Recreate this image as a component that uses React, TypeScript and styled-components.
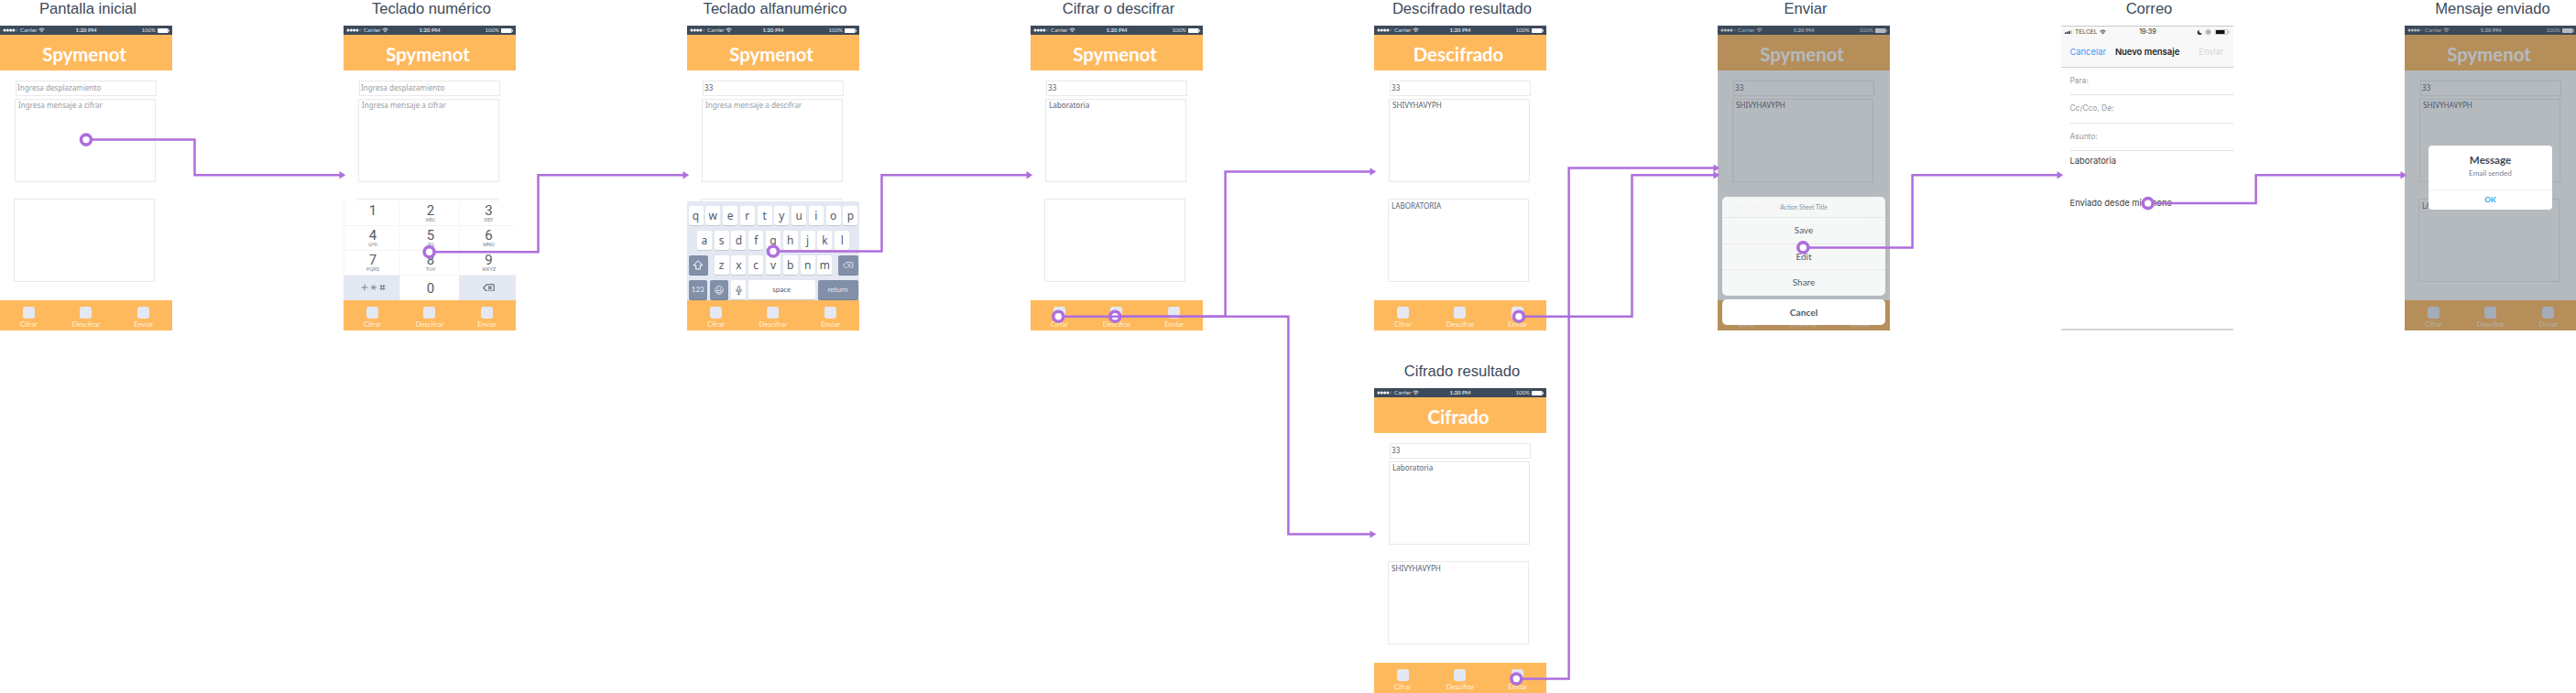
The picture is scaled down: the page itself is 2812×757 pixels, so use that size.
import React from "react";
import styled, { createGlobalStyle, css } from "styled-components";

const color = {
  ink: "#3d4a5b",
  orange: "#ffb95d",
  line: "#e9e9eb",
  purple: "#ae6edd",
  keyboard: "#e4e8f2",
  darkKey: "#8190a8",
  text: "#59616d",
  placeholder: "#959ca6",
};

const GlobalStyle = createGlobalStyle`
  * { box-sizing: border-box; }
  body { margin: 0; background: #fff; overflow: hidden; }
`;

const Board = styled.main`
  position: relative;
  display: grid;
  grid-template-columns: repeat(8, 188px);
  grid-template-rows: 361px 361px;
  column-gap: 187px;
  row-gap: 35px;
  width: 2812px;
  height: 757px;
  overflow: hidden;
`;

const Frame = styled.section<{ $col: number; $row?: number }>`
  grid-column: ${(p) => p.$col};
  grid-row: ${(p) => p.$row ?? 1};
  display: flex;
  flex-direction: column;
`;

const FrameLabel = styled.h2`
  margin: 0;
  padding-left: 4px;
  height: 28px;
  font: 400 16.6px/19px "Liberation Sans", Arial, sans-serif;
  color: ${color.ink};
  text-align: center;
  white-space: nowrap;
`;

const Phone = styled.div`
  position: relative;
  display: flex;
  flex-direction: column;
  height: 333px;
  background: #fff;
  font-family: Lato, sans-serif;
  overflow: hidden;
`;

const StatusBar = styled.div`
  display: grid;
  grid-template-columns: 1fr auto 1fr;
  align-items: center;
  height: 10px;
  padding: 0 3px;
  background: ${color.ink};
  color: #dfe3e8;
  font-size: 6.1px;
  line-height: 10px;
`;

const StatusGroup = styled.div<{ $end?: boolean }>`
  display: flex;
  align-items: center;
  gap: 2px;
  justify-content: ${(p) => (p.$end ? "flex-end" : "flex-start")};
`;

const Clock = styled.span`
  font-weight: 700;
  font-size: 6px;
`;

const Header = styled.header`
  height: 39px;
  padding-right: 4px;
  background: ${color.orange};
  color: #fff;
  font-weight: 700;
  font-size: 20.4px;
  line-height: 42px;
  text-align: center;
`;

const Content = styled.div`
  flex: 1;
  display: flex;
  flex-direction: column;
  padding: 11px 0 0 15px;
`;

const fieldText = css<{ $placeholder?: boolean }>`
  border: 1px solid ${color.line};
  font-family: "Noto Sans", sans-serif;
  font-size: 8.1px;
  color: ${(p) => (p.$placeholder ? color.placeholder : color.text)};
  white-space: nowrap;
`;

const ShiftField = styled.div<{ $placeholder?: boolean }>`
  ${fieldText}
  width: 154px;
  height: 17px;
  margin-left: 2px;
  padding-left: 1px;
  line-height: 14px;
`;

const MessageBox = styled.div<{ $placeholder?: boolean; $result?: boolean }>`
  ${fieldText}
  width: 154px;
  height: 91px;
  margin-left: ${(p) => (p.$result ? 0 : 1)}px;
  margin-top: ${(p) => (p.$result ? 18 : 3)}px;
  padding-left: 3px;
  line-height: ${(p) => (p.$result ? 13 : 11)}px;
`;

const TabBar = styled.nav`
  display: grid;
  grid-template-columns: repeat(3, 1fr);
  height: 33px;
  padding-top: 7px;
  background: ${color.orange};
`;

const Tab = styled.div`
  display: flex;
  flex-direction: column;
  align-items: center;
  color: #fff2dd;
  font-size: 7.6px;
  line-height: 10px;
`;

const TabIcon = styled.span`
  width: 13px;
  height: 13px;
  margin-bottom: 1px;
  border-radius: 3px;
  background: ${color.keyboard};
`;

const Overlay = styled.div`
  position: absolute;
  inset: 0;
  background: rgba(60, 73, 86, 0.38);
`;

const NumPad = styled.div`
  position: absolute;
  left: 0;
  right: 0;
  bottom: 33px;
  display: grid;
  grid-template-columns: 61px 65px 62px;
  grid-template-rows: repeat(4, 27px);
  background: #fff;
  color: ${color.ink};
  font-family: Roboto, sans-serif;
`;

const NumKey = styled.div<{ $muted?: boolean }>`
  display: flex;
  flex-direction: column;
  align-items: center;
  padding-top: 3px;
  padding-left: 2px;
  border-left: 1px solid #f4f5f7;
  border-bottom: 1px solid #f4f5f7;
  background: ${(p) => (p.$muted ? color.keyboard : "#fff")};
  color: #525b68;
  font-size: 15px;
  line-height: 14px;
  ${(p) => p.$muted && "justify-content: center; padding-top: 0; border-color: transparent;"}
`;

const KeyLetters = styled.span`
  color: #7b8490;
  font-size: 5.6px;
  line-height: 7px;
`;

const ZeroDigit = styled.span`
  padding-top: 4px;
`;

const Keyboard = styled.div`
  position: absolute;
  left: 0;
  right: 0;
  bottom: 33px;
  display: flex;
  flex-direction: column;
  gap: 6px;
  height: 108px;
  padding: 5px 1.5px 0;
  background: ${color.keyboard};
`;

const KeyRow = styled.div<{ $spread?: boolean }>`
  display: flex;
  justify-content: ${(p) => (p.$spread ? "space-between" : "center")};
  gap: ${(p) => (p.$spread ? 0 : 2.8)}px;
  height: 21px;
`;

const KeyGroup = styled.div`
  display: flex;
  gap: 2.8px;
`;

const Key = styled.div<{ $w?: number; $dark?: boolean; $small?: boolean }>`
  display: flex;
  align-items: center;
  justify-content: center;
  width: ${(p) => p.$w ?? 16}px;
  height: 21px;
  border-radius: 2px;
  background: ${(p) => (p.$dark ? color.darkKey : "#fff")};
  box-shadow: 0 1px 0 ${(p) => (p.$dark ? "#76849b" : "#c3c9d3")};
  color: ${(p) => (p.$dark ? "#e9ecf2" : "#525b68")};
  font-family: ${(p) => (p.$small ? "Lato" : '"Noto Sans"')}, sans-serif;
  font-size: ${(p) => (p.$small ? 8.1 : 12)}px;
  line-height: 19px;
`;

const SheetArea = styled.div`
  position: absolute;
  left: 5px;
  right: 5px;
  bottom: 6px;
  display: flex;
  flex-direction: column;
  gap: 4px;
  color: #4f5967;
  text-align: center;
`;

const Sheet = styled.div`
  border-radius: 5px;
  background: rgba(250, 251, 251, 0.94);
`;

const SheetTitle = styled.div`
  height: 22px;
  color: #8492a8;
  font-size: 6.6px;
  line-height: 23px;
`;

const SheetAction = styled.div`
  height: 28.6px;
  border-top: 1px solid #e6e9ee;
  font-size: 9.9px;
  line-height: 26px;
`;

const SheetCancel = styled.div`
  height: 28px;
  border-radius: 5px;
  background: #fff;
  font-weight: 700;
  font-size: 10.2px;
  line-height: 28px;
`;

const Alert = styled.div`
  position: absolute;
  left: 26px;
  top: 131px;
  width: 135px;
  height: 70px;
  border-radius: 4px;
  background: #fff;
  text-align: center;
`;

const AlertTitle = styled.div`
  padding-top: 9px;
  color: #3f4a59;
  font-weight: 700;
  font-size: 11.6px;
  line-height: 14px;
`;

const AlertText = styled.div`
  height: 25px;
  color: #78828f;
  font-size: 8.1px;
  line-height: 14px;
`;

const AlertButton = styled.div`
  border-top: 1px solid #eceef1;
  color: #2ea9ea;
  font-weight: 700;
  font-size: 8.4px;
  line-height: 20px;
`;

const MailPhone = styled(Phone)`
  border-top: 1px solid #c9c9c9;
  border-bottom: 2px solid #d5d5d5;
  font-family: Inter, sans-serif;
`;

const MailHeader = styled.div`
  height: 45px;
  border-bottom: 1px solid #d2d2d2;
  background: #f8f8f8;
`;

const MailStatus = styled.div`
  display: grid;
  grid-template-columns: 1fr auto 1fr;
  align-items: center;
  height: 12px;
  padding: 0 4px;
  color: #4a4a4a;
  font-size: 6.7px;
  line-height: 12px;
`;

const MailClock = styled.span`
  padding-left: 1px;
  font-weight: 500;
  font-size: 7.2px;
`;

const MailNav = styled.div`
  display: flex;
  justify-content: space-between;
  padding: 8px 10.5px 0 9.5px;
  font-size: 9.35px;
  line-height: 16px;
  color: #d6d6d8;
`;

const MailCancel = styled.span`
  color: #3c97fb;
`;

const MailTitle = styled.span`
  padding-right: 11px;
  color: #222;
  font-weight: 600;
  font-size: 9.45px;
`;

const MailField = styled.div`
  height: 30.3px;
  margin-left: 9.5px;
  border-bottom: 1px solid #e2e2e2;
  color: #98989c;
  font-size: 8.4px;
  line-height: 28px;
`;

const MailBody = styled.div`
  display: flex;
  flex-direction: column;
  gap: 32px;
  padding: 4px 0 0 9.5px;
  color: #3c3c3c;
  font-size: 9.4px;
  line-height: 14px;
`;

const Connectors = styled.svg`
  position: absolute;
  left: 0;
  top: 0;
  pointer-events: none;
`;

function Wifi({ fill }: { fill: string }) {
  return (
    <svg width="7" height="6" viewBox="0 0 14 11">
      <path d="M1 4Q7 -1.5 13 4M3.5 6.6Q7 3.4 10.5 6.6" fill="none" stroke={fill} strokeWidth="2" />
      <path d="M5 8Q7 6.6 9 8L7 10.6Z" fill={fill} />
    </svg>
  );
}

function DeleteIcon({ width }: { width: number }) {
  return (
    <svg width={width} height={width * 0.68} viewBox="0 0 25 17" fill="none" stroke="currentColor" strokeWidth="2">
      <path d="M8 1.5H22Q23.5 1.5 23.5 3V14Q23.5 15.5 22 15.5H8L1.5 8.5Z" />
      <path d="M11.5 5L18.5 12M18.5 5L11.5 12" />
    </svg>
  );
}

function PhoneStatus() {
  return (
    <StatusBar>
      <StatusGroup>
        <svg width="17" height="4" viewBox="0 0 17 4">
          {[2, 5.3, 8.6, 11.9].map((x) => (
            <circle key={x} cx={x} cy="2" r="1.5" fill="#fff" />
          ))}
          <circle cx="15.4" cy="2" r="1.1" fill="none" stroke="#8a94a1" strokeWidth=".5" />
        </svg>
        Carrier
        <Wifi fill="#e8ebef" />
      </StatusGroup>
      <Clock>1:20 PM</Clock>
      <StatusGroup $end>
        100%
        <svg width="13" height="5" viewBox="0 0 13 5">
          <rect x="0" y="0" width="11.6" height="5" rx=".8" fill="#fff" />
          <rect x="12" y="1.6" width="1" height="1.8" fill="#fff" />
        </svg>
      </StatusGroup>
    </StatusBar>
  );
}

type AppScreenProps = {
  title?: string;
  shift?: string;
  message?: string;
  result?: string;
  hint?: string;
  children?: React.ReactNode;
};

function AppScreen({ title = "Spymenot", shift, message, result, hint = "Ingresa mensaje a cifrar", children }: AppScreenProps) {
  return (
    <Phone>
      <PhoneStatus />
      <Header>{title}</Header>
      <Content>
        <ShiftField $placeholder={!shift}>{shift ?? "Ingresa desplazamiento"}</ShiftField>
        <MessageBox $placeholder={!message}>{message ?? hint}</MessageBox>
        <MessageBox $result>{result}</MessageBox>
      </Content>
      <TabBar>
        {["Cifrar", "Descifrar", "Enviar"].map((name) => (
          <Tab key={name}>
            <TabIcon />
            {name}
          </Tab>
        ))}
      </TabBar>
      {children}
    </Phone>
  );
}

const digits: [string, string][] = [
  ["1", ""], ["2", "ABC"], ["3", "DEF"],
  ["4", "GHI"], ["5", "JKL"], ["6", "MNO"],
  ["7", "PQRS"], ["8", "TUV"], ["9", "WXYZ"],
];

function NumericPad() {
  return (
    <NumPad>
      {digits.map(([digit, letters]) => (
        <NumKey key={digit}>
          {digit}
          <KeyLetters>{letters}</KeyLetters>
        </NumKey>
      ))}
      <NumKey $muted>
        <svg width="27" height="8" viewBox="0 0 27 8" fill="none" stroke="#707986" strokeWidth=".9">
          <path d="M.5 4H7.5M4 .5V7.5" />
          <path d="M10.5 4H17M12 1.4L15.5 6.6M15.5 1.4L12 6.6" />
          <path d="M20.5 2.6H26.5M20.5 5.4H26.5M22.2 1V7M24.8 1V7" />
        </svg>
      </NumKey>
      <NumKey>
        <ZeroDigit>0</ZeroDigit>
      </NumKey>
      <NumKey $muted>
        <DeleteIcon width={13} />
      </NumKey>
    </NumPad>
  );
}

function AlphaKeyboard() {
  return (
    <Keyboard>
      <KeyRow $spread>
        {"qwertyuiop".split("").map((k) => <Key key={k}>{k}</Key>)}
      </KeyRow>
      <KeyRow>
        {"asdfghjkl".split("").map((k) => <Key key={k}>{k}</Key>)}
      </KeyRow>
      <KeyRow $spread>
        <Key $dark $w={21.5}>
          <svg width="12" height="11" viewBox="0 0 12 11" fill="none" stroke="#fff" strokeWidth="1">
            <path d="M6 .8L11 5.8H8.3V10H3.7V5.8H1Z" />
          </svg>
        </Key>
        <KeyGroup>
          {"zxcvbnm".split("").map((k) => <Key key={k}>{k}</Key>)}
        </KeyGroup>
        <Key $dark $w={21.5}>
          <DeleteIcon width={11.5} />
        </Key>
      </KeyRow>
      <KeyRow $spread>
        <Key $dark $small $w={20.5}>123</Key>
        <Key $dark $w={20.5}>
          <svg width="10" height="10" viewBox="0 0 10 10" fill="none" stroke="#e9ecf2" strokeWidth=".9">
            <circle cx="5" cy="5" r="4.3" />
            <path d="M2.2 5.4H7.8Q7.4 8 5 8Q2.6 8 2.2 5.4ZM3.5 2.8V4.2M6.5 2.8V4.2" />
          </svg>
        </Key>
        <Key>
          <svg width="7" height="10" viewBox="0 0 7 10" fill="none" stroke="#525b68" strokeWidth=".8">
            <rect x="2.3" y=".5" width="2.4" height="5.5" rx="1.2" />
            <path d="M.8 4V5Q.8 7.4 3.5 7.4Q6.2 7.4 6.2 5V4M3.5 7.4V9.6M2 9.6H5" />
          </svg>
        </Key>
        <Key $small $w={73}>space</Key>
        <Key $dark $small $w={44}>return</Key>
      </KeyRow>
    </Keyboard>
  );
}

function MailScreen() {
  return (
    <MailPhone>
      <MailHeader>
        <MailStatus>
          <StatusGroup>
            <svg width="9" height="4" viewBox="0 0 9 4" fill="#222">
              <rect x="0" y="2.4" width="1.5" height="1.6" />
              <rect x="2.2" y="1.6" width="1.5" height="2.4" />
              <rect x="4.4" y=".8" width="1.5" height="3.2" />
              <rect x="7" y="0" width="1" height="4" fill="#bbb" />
            </svg>
            TELCEL
            <Wifi fill="#333" />
          </StatusGroup>
          <MailClock>19:39</MailClock>
          <StatusGroup $end>
            <svg width="36" height="6" viewBox="0 0 36 6">
              <path d="M2.6 .6A2.8 2.8 0 1 0 6 4.4A2.9 2.9 0 0 1 2.6 .6Z" fill="#333" />
              <circle cx="12.5" cy="3" r="2.3" fill="none" stroke="#777" strokeWidth=".8" />
              <circle cx="12.5" cy="3" r="1" fill="#777" />
              <rect x="20.3" y=".3" width="13.5" height="5.4" rx="1.3" fill="none" stroke="#999" strokeWidth=".6" />
              <rect x="21" y=".9" width="9.5" height="4.2" rx=".6" fill="#111" />
              <rect x="34.5" y="2" width=".9" height="2" fill="#999" />
            </svg>
          </StatusGroup>
        </MailStatus>
        <MailNav>
          <MailCancel>Cancelar</MailCancel>
          <MailTitle>Nuevo mensaje</MailTitle>
          <span>Enviar</span>
        </MailNav>
      </MailHeader>
      <MailField>Para:</MailField>
      <MailField>Cc/Cco, De:</MailField>
      <MailField>Asunto:</MailField>
      <MailBody>
        <span>Laboratoria</span>
        <span>Enviado desde mi iPhone</span>
      </MailBody>
    </MailPhone>
  );
}

// Each link starts at a hotspot, turns at `turn` and ends on the edge of a screen.
type Link = { x: number; y: number; turn: number; toX: number; toY: number };

const links: Link[] = [
  { x: 94, y: 152.6, turn: 212.5, toX: 375, toY: 191.2 },
  { x: 468.6, y: 275.2, turn: 587.5, toX: 750, toY: 191.2 },
  { x: 844, y: 274.5, turn: 962.5, toX: 1125, toY: 191.2 },
  { x: 1217.2, y: 345.7, turn: 1337.6, toX: 1500, toY: 187.5 },
  { x: 1155.3, y: 345.7, turn: 1406.4, toX: 1500, toY: 583.6 },
  { x: 1658, y: 345.7, turn: 1781.5, toX: 1875, toY: 191.2 },
  { x: 1655.3, y: 741.5, turn: 1712.6, toX: 1875, toY: 183.6 },
  { x: 1968.3, y: 270.4, turn: 2087.6, toX: 2250, toY: 191.2 },
  { x: 2344.7, y: 222.1, turn: 2462.6, toX: 2625, toY: 191.2 },
];

function FlowLinks() {
  return (
    <Connectors width="2812" height="757" viewBox="0 0 2812 757">
      {links.map(({ x, y, turn, toX, toY }) => (
        <g key={`${x}-${y}`}>
          <circle cx={x} cy={y} r="5.5" fill="#fff" stroke={color.purple} strokeWidth="3.6" />
          <path d={`M${x + 6} ${y}H${turn}V${toY}H${toX - 4}`} fill="none" stroke={color.purple} strokeWidth="2.5" />
          <path d={`M${toX - 4.5} ${toY - 4.2}L${toX + 2.2} ${toY}L${toX - 4.5} ${toY + 4.2}Z`} fill={color.purple} />
        </g>
      ))}
    </Connectors>
  );
}

export default function App() {
  return (
    <>
      <GlobalStyle />
      <Board>
        <Frame $col={1}>
          <FrameLabel>Pantalla inicial</FrameLabel>
          <AppScreen />
        </Frame>
        <Frame $col={2}>
          <FrameLabel>Teclado numérico</FrameLabel>
          <AppScreen>
            <NumericPad />
          </AppScreen>
        </Frame>
        <Frame $col={3}>
          <FrameLabel>Teclado alfanumérico</FrameLabel>
          <AppScreen shift="33" hint="Ingresa mensaje a descifrar">
            <AlphaKeyboard />
          </AppScreen>
        </Frame>
        <Frame $col={4}>
          <FrameLabel>Cifrar o descifrar</FrameLabel>
          <AppScreen shift="33" message="Laboratoria" />
        </Frame>
        <Frame $col={5}>
          <FrameLabel>Descifrado resultado</FrameLabel>
          <AppScreen title="Descifrado" shift="33" message="SHIVYHAVYPH" result="LABORATORIA" />
        </Frame>
        <Frame $col={5} $row={2}>
          <FrameLabel>Cifrado resultado</FrameLabel>
          <AppScreen title="Cifrado" shift="33" message="Laboratoria" result="SHIVYHAVYPH" />
        </Frame>
        <Frame $col={6}>
          <FrameLabel>Enviar</FrameLabel>
          <AppScreen shift="33" message="SHIVYHAVYPH" result="LABORATORIA">
            <Overlay />
            <SheetArea>
              <Sheet>
                <SheetTitle>Action Sheet Title</SheetTitle>
                <SheetAction>Save</SheetAction>
                <SheetAction>Edit</SheetAction>
                <SheetAction>Share</SheetAction>
              </Sheet>
              <SheetCancel>Cancel</SheetCancel>
            </SheetArea>
          </AppScreen>
        </Frame>
        <Frame $col={7}>
          <FrameLabel>Correo</FrameLabel>
          <MailScreen />
        </Frame>
        <Frame $col={8}>
          <FrameLabel>Mensaje enviado</FrameLabel>
          <AppScreen shift="33" message="SHIVYHAVYPH" result="LABORATORIA">
            <Overlay />
            <Alert>
              <AlertTitle>Message</AlertTitle>
              <AlertText>Email sended</AlertText>
              <AlertButton>OK</AlertButton>
            </Alert>
          </AppScreen>
        </Frame>
        <FlowLinks />
      </Board>
    </>
  );
}
